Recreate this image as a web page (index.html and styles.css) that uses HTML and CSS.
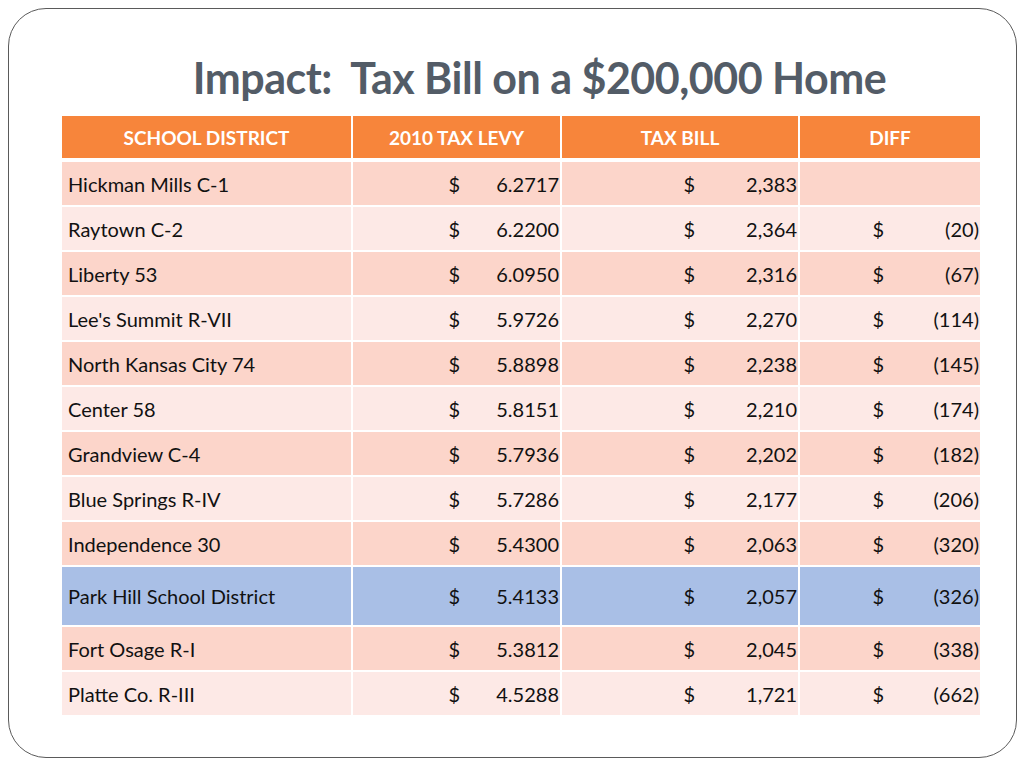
FILE: index.html
```html
<!DOCTYPE html>
<html>
<head>
<meta charset="utf-8">
<link rel="stylesheet" href="styles.css">
</head>
<body>
<div class="slide">
  <h1 class="title">Impact:&nbsp; Tax Bill on a $200,000 Home</h1>
  <table class="tax">
    <colgroup>
      <col class="c1"><col class="c2"><col class="c3"><col class="c4">
    </colgroup>
    <thead>
      <tr><th>SCHOOL DISTRICT</th><th>2010 TAX LEVY</th><th>TAX BILL</th><th>DIFF</th></tr>
    </thead>
    <tbody>
      <tr class="dark"><td class="name">Hickman Mills C-1</td><td class="num lv"><span class="cur">$</span><span class="amt">6.2717</span></td><td class="num bl"><span class="cur">$</span><span class="amt">2,383</span></td><td class="num df"></td></tr>
      <tr class="light"><td class="name">Raytown C-2</td><td class="num lv"><span class="cur">$</span><span class="amt">6.2200</span></td><td class="num bl"><span class="cur">$</span><span class="amt">2,364</span></td><td class="num df"><span class="cur">$</span><span class="amt">(20)</span></td></tr>
      <tr class="dark"><td class="name">Liberty 53</td><td class="num lv"><span class="cur">$</span><span class="amt">6.0950</span></td><td class="num bl"><span class="cur">$</span><span class="amt">2,316</span></td><td class="num df"><span class="cur">$</span><span class="amt">(67)</span></td></tr>
      <tr class="light"><td class="name">Lee's Summit R-VII</td><td class="num lv"><span class="cur">$</span><span class="amt">5.9726</span></td><td class="num bl"><span class="cur">$</span><span class="amt">2,270</span></td><td class="num df"><span class="cur">$</span><span class="amt">(114)</span></td></tr>
      <tr class="dark"><td class="name">North Kansas City 74</td><td class="num lv"><span class="cur">$</span><span class="amt">5.8898</span></td><td class="num bl"><span class="cur">$</span><span class="amt">2,238</span></td><td class="num df"><span class="cur">$</span><span class="amt">(145)</span></td></tr>
      <tr class="light"><td class="name">Center 58</td><td class="num lv"><span class="cur">$</span><span class="amt">5.8151</span></td><td class="num bl"><span class="cur">$</span><span class="amt">2,210</span></td><td class="num df"><span class="cur">$</span><span class="amt">(174)</span></td></tr>
      <tr class="dark"><td class="name">Grandview C-4</td><td class="num lv"><span class="cur">$</span><span class="amt">5.7936</span></td><td class="num bl"><span class="cur">$</span><span class="amt">2,202</span></td><td class="num df"><span class="cur">$</span><span class="amt">(182)</span></td></tr>
      <tr class="light"><td class="name">Blue Springs R-IV</td><td class="num lv"><span class="cur">$</span><span class="amt">5.7286</span></td><td class="num bl"><span class="cur">$</span><span class="amt">2,177</span></td><td class="num df"><span class="cur">$</span><span class="amt">(206)</span></td></tr>
      <tr class="dark"><td class="name">Independence 30</td><td class="num lv"><span class="cur">$</span><span class="amt">5.4300</span></td><td class="num bl"><span class="cur">$</span><span class="amt">2,063</span></td><td class="num df"><span class="cur">$</span><span class="amt">(320)</span></td></tr>
      <tr class="blue"><td class="name">Park Hill School District</td><td class="num lv"><span class="cur">$</span><span class="amt">5.4133</span></td><td class="num bl"><span class="cur">$</span><span class="amt">2,057</span></td><td class="num df"><span class="cur">$</span><span class="amt">(326)</span></td></tr>
      <tr class="dark"><td class="name">Fort Osage R-I</td><td class="num lv"><span class="cur">$</span><span class="amt">5.3812</span></td><td class="num bl"><span class="cur">$</span><span class="amt">2,045</span></td><td class="num df"><span class="cur">$</span><span class="amt">(338)</span></td></tr>
      <tr class="light"><td class="name">Platte Co. R-III</td><td class="num lv"><span class="cur">$</span><span class="amt">4.5288</span></td><td class="num bl"><span class="cur">$</span><span class="amt">1,721</span></td><td class="num df"><span class="cur">$</span><span class="amt">(662)</span></td></tr>
    </tbody>
  </table>
</div>
</body>
</html>
```

FILE: styles.css
```css
html, body {
  margin: 0;
  padding: 0;
  background: #ffffff;
}
body {
  width: 1024px;
  height: 768px;
  padding: 8px;
  box-sizing: border-box;
  font-family: Lato, "Open Sans", sans-serif;
}
.slide {
  width: 1009px;
  height: 750px;
  box-sizing: border-box;
  border: 1px solid #5a5a5a;
  border-radius: 38px;
  padding: 107px 0 0 53px;
  position: relative;
}
.title {
  position: absolute;
  left: 54px;
  right: 0;
  top: 43px;
  margin: 0;
  text-align: center;
  font-size: 43px;
  line-height: 52px;
  font-weight: 700;
  color: #535c67;
  letter-spacing: -0.5px;
}
.tax {
  border-collapse: collapse;
  table-layout: fixed;
  width: 918px;
  font-size: 20px;
  color: #111;
}
.c1 { width: 290px; }
.c2 { width: 209px; }
.c3 { width: 238px; }
.c4 { width: 181px; }
.tax th {
  background: #f7853b;
  color: #ffffff;
  font-weight: 700;
  font-size: 19px;
  height: 42px;
  padding: 0;
  border-left: 2px solid #fff;
  border-right: 2px solid #fff;
  border-bottom: 4px solid #fff;
  text-align: center;
}
.tax td {
  height: 43px;
  padding: 0;
  border: 2px solid #fff;
  white-space: nowrap;
}
.tax tr > *:first-child { border-left: none; }
.tax tr > *:last-child { border-right: none; }
.tax tbody tr:last-child td { border-bottom: none; }
.dark td { background: #fcd5ca; }
.light td { background: #fde9e6; }
.blue td { background: #a9bfe6; height: 58px; }
.name { padding-left: 6px !important; }
.num { text-align: right; padding-right: 1px !important; }
.cur { display: inline-block; }
.amt { display: inline-block; text-align: right; }
.lv .amt { width: 99px; }
.bl .amt { width: 102px; }
.df .amt { width: 95px; }
```
